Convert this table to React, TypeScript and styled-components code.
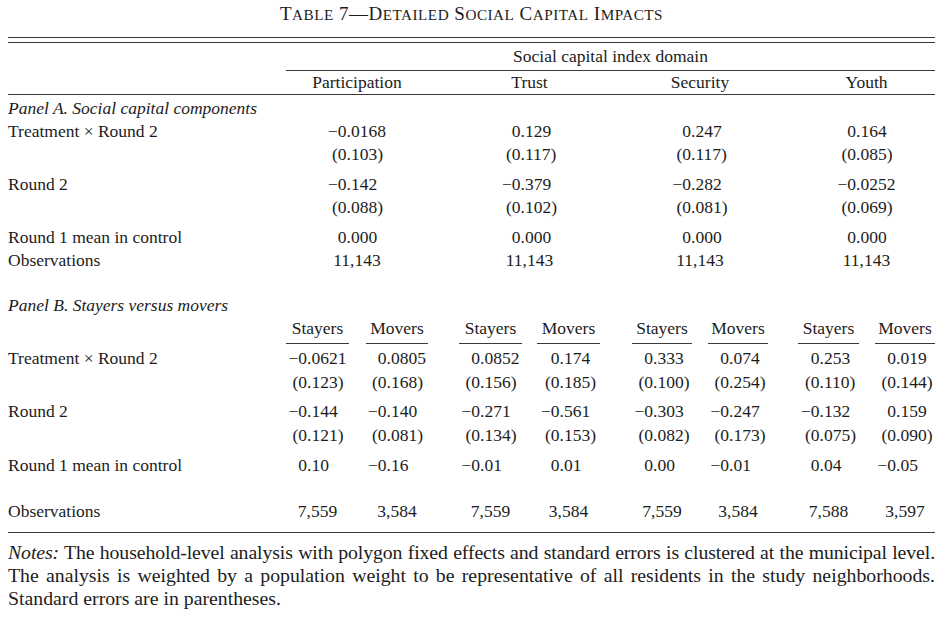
import React from 'react';
import styled, { createGlobalStyle } from 'styled-components';

const GlobalStyle = createGlobalStyle`
  body {
    margin: 0;
    background: #ffffff;
  }
`;

const INK = '#1c1c1c';
const RULE = '#3a3a3a';
// label column, then Stayers / gap / Movers / gap ... for the four domains
const COLS = '278px 63px 17px 62px 31px 63px 15px 63px 32px 60px 16px 60px 30px 61px 16px 60px';

const domains = ['Participation', 'Trust', 'Security', 'Youth'];

const panelA = [
  { label: 'Treatment × Round 2', values: ['−0.0168', '0.129', '0.247', '0.164'], top: 0 },
  { label: '', values: ['(0.103)', '(0.117)', '(0.117)', '(0.085)'], top: 0 },
  { label: 'Round 2', values: ['−0.142', '−0.379', '−0.282', '−0.0252'], top: 7 },
  { label: '', values: ['(0.088)', '(0.102)', '(0.081)', '(0.069)'], top: 0 },
  { label: 'Round 1 mean in control', values: ['0.000', '0.000', '0.000', '0.000'], top: 7 },
  { label: 'Observations', values: ['11,143', '11,143', '11,143', '11,143'], top: 0 },
];

const panelB = [
  { label: 'Treatment × Round 2', values: ['−0.0621', '0.0805', '0.0852', '0.174', '0.333', '0.074', '0.253', '0.019'], top: 3 },
  { label: '', values: ['(0.123)', '(0.168)', '(0.156)', '(0.185)', '(0.100)', '(0.254)', '(0.110)', '(0.144)'], top: 1 },
  { label: 'Round 2', values: ['−0.144', '−0.140', '−0.271', '−0.561', '−0.303', '−0.247', '−0.132', '0.159'], top: 6 },
  { label: '', values: ['(0.121)', '(0.081)', '(0.134)', '(0.153)', '(0.082)', '(0.173)', '(0.075)', '(0.090)'], top: 1 },
  { label: 'Round 1 mean in control', values: ['0.10', '−0.16', '−0.01', '0.01', '0.00', '−0.01', '0.04', '−0.05'], top: 7 },
  { label: 'Observations', values: ['7,559', '3,584', '7,559', '3,584', '7,559', '3,584', '7,588', '3,597'], top: 23 },
];

// Times glyph widths in em, used to line numbers up on the decimal point
const GLYPH: Record<string, number> = { '.': 0.25, ',': 0.25, '(': 0.333, ')': 0.333, '−': 0.564 };
const width = (s: string) => [...s].reduce((sum, c) => sum + (GLYPH[c] ?? 0.5), 0);

const split = (v: string) => {
  const i = v.indexOf('.');
  return i < 0 ? null : [v.slice(0, i), v.slice(i)];
};

const columnFit = (rows: { values: string[] }[], n: number) =>
  Array.from({ length: n }, (_, c) => {
    let iw = 0;
    let fw = 0;
    rows.forEach((r) => {
      const parts = split(r.values[c]);
      if (!parts) return;
      iw = Math.max(iw, width(parts[0]));
      fw = Math.max(fw, width(parts[1]));
    });
    return { iw, fw };
  });

const fitA = columnFit(panelA, 4);
const fitB = columnFit(panelB, 8);

const Page = styled.div`
  width: 927px;
  padding: 0 8px;
  font-family: 'Liberation Serif', 'Times New Roman', serif;
  font-size: 17.5px;
  line-height: 23px;
  color: ${INK};
`;

const Title = styled.div`
  margin-top: 2px;
  text-align: center;
  font-size: 19px;
  letter-spacing: 0.5px;
`;

const SmallCap = styled.span`
  font-size: 0.8em;
  text-transform: uppercase;
`;

const DoubleRule = styled.div`
  margin-top: 11px;
  height: 4px;
  border-top: 1px solid ${RULE};
  border-bottom: 1px solid ${RULE};
`;

const Row = styled.div<{ $top?: number; $rule?: boolean }>`
  display: grid;
  grid-template-columns: ${COLS};
  margin-top: ${(p) => p.$top ?? 0}px;
  padding-bottom: ${(p) => (p.$rule ? 9 : 0)}px;
  border-bottom: ${(p) => (p.$rule ? `1px solid ${RULE}` : 'none')};
  white-space: nowrap;
`;

const HeadRow = styled(Row)`
  padding-bottom: 0;
`;

const Label = styled.div`
  grid-column: 1;
`;

const PanelLabel = styled.div`
  grid-column: 1 / -1;
  font-style: italic;
`;

const Cell = styled.div<{ $col: number; $span?: number }>`
  grid-column: ${(p) => p.$col} / span ${(p) => p.$span ?? 1};
  text-align: center;
`;

const SpanHead = styled(Cell)`
  padding-bottom: 2px;
  border-bottom: 1px solid ${RULE};
`;

const SubHead = styled(Cell)`
  padding-bottom: 3px;
  border-bottom: 1px solid ${RULE};
`;

const NumBox = styled.span<{ $iw: number; $fw: number }>`
  display: inline-grid;
  grid-template-columns: ${(p) => p.$iw}em ${(p) => p.$fw}em;
`;

const IntPart = styled.span`
  text-align: right;
`;

const FracPart = styled.span`
  text-align: left;
`;

const Notes = styled.div`
  margin-top: 8px;
  font-size: 19.8px;
  line-height: 23px;
`;

const NoteLine = styled.div<{ $justify?: boolean; $squeeze?: number }>`
  white-space: nowrap;
  text-align: ${(p) => (p.$justify ? 'justify' : 'left')};
  text-align-last: ${(p) => (p.$justify ? 'justify' : 'auto')};
  letter-spacing: ${(p) => p.$squeeze ?? 0}px;
`;

const Em = styled.em`
  font-style: italic;
`;

const Num: React.FC<{ v: string; iw: number; fw: number }> = ({ v, iw, fw }) => {
  const parts = split(v);
  if (!parts) return <>{v}</>;
  return (
    <NumBox $iw={iw} $fw={fw}>
      <IntPart>{parts[0]}</IntPart>
      <FracPart>{parts[1]}</FracPart>
    </NumBox>
  );
};

// lower-case runs become small capitals, the rest keeps full size
const SmallCaps: React.FC<{ text: string }> = ({ text }) => (
  <>
    {text.split(/([a-z]+)/).map((part, i) =>
      /^[a-z]+$/.test(part) ? <SmallCap key={i}>{part}</SmallCap> : <React.Fragment key={i}>{part}</React.Fragment>,
    )}
  </>
);

export default function App() {
  return (
    <Page>
      <GlobalStyle />
      <Title>
        <SmallCaps text="Table 7—Detailed Social Capital Impacts" />
      </Title>
      <DoubleRule />

      <HeadRow $top={2}>
        <SpanHead $col={2} $span={15}>Social capital index domain</SpanHead>
      </HeadRow>
      <HeadRow $rule>
        {domains.map((d, p) => (
          <Cell key={d} $col={2 + 4 * p} $span={3}>{d}</Cell>
        ))}
      </HeadRow>

      <Row $top={2}>
        <PanelLabel>Panel A. Social capital components</PanelLabel>
      </Row>
      {panelA.map((r, i) => (
        <Row key={`a${i}`} $top={r.top}>
          <Label>{r.label}</Label>
          {r.values.map((v, p) => (
            <Cell key={p} $col={2 + 4 * p} $span={3}>
              <Num v={v} iw={fitA[p].iw} fw={fitA[p].fw} />
            </Cell>
          ))}
        </Row>
      ))}

      <Row $top={22}>
        <PanelLabel>Panel B. Stayers versus movers</PanelLabel>
      </Row>
      <Row>
        {domains.flatMap((d, p) => [
          <SubHead key={`${d}s`} $col={2 + 4 * p}>Stayers</SubHead>,
          <SubHead key={`${d}m`} $col={4 + 4 * p}>Movers</SubHead>,
        ])}
      </Row>
      {panelB.map((r, i) => (
        <Row key={`b${i}`} $top={r.top} $rule={i === panelB.length - 1}>
          <Label>{r.label}</Label>
          {r.values.map((v, c) => (
            <Cell key={c} $col={2 + 2 * c}>
              <Num v={v} iw={fitB[c].iw} fw={fitB[c].fw} />
            </Cell>
          ))}
        </Row>
      ))}

      <Notes>
        <NoteLine $justify $squeeze={-0.1}>
          <Em>Notes:</Em> The household-level analysis with polygon fixed effects and standard errors is clustered at the municipal level.
        </NoteLine>
        <NoteLine $justify>
          The analysis is weighted by a population weight to be representative of all residents in the study neighborhoods.
        </NoteLine>
        <NoteLine>Standard errors are in parentheses.</NoteLine>
      </Notes>
    </Page>
  );
}
